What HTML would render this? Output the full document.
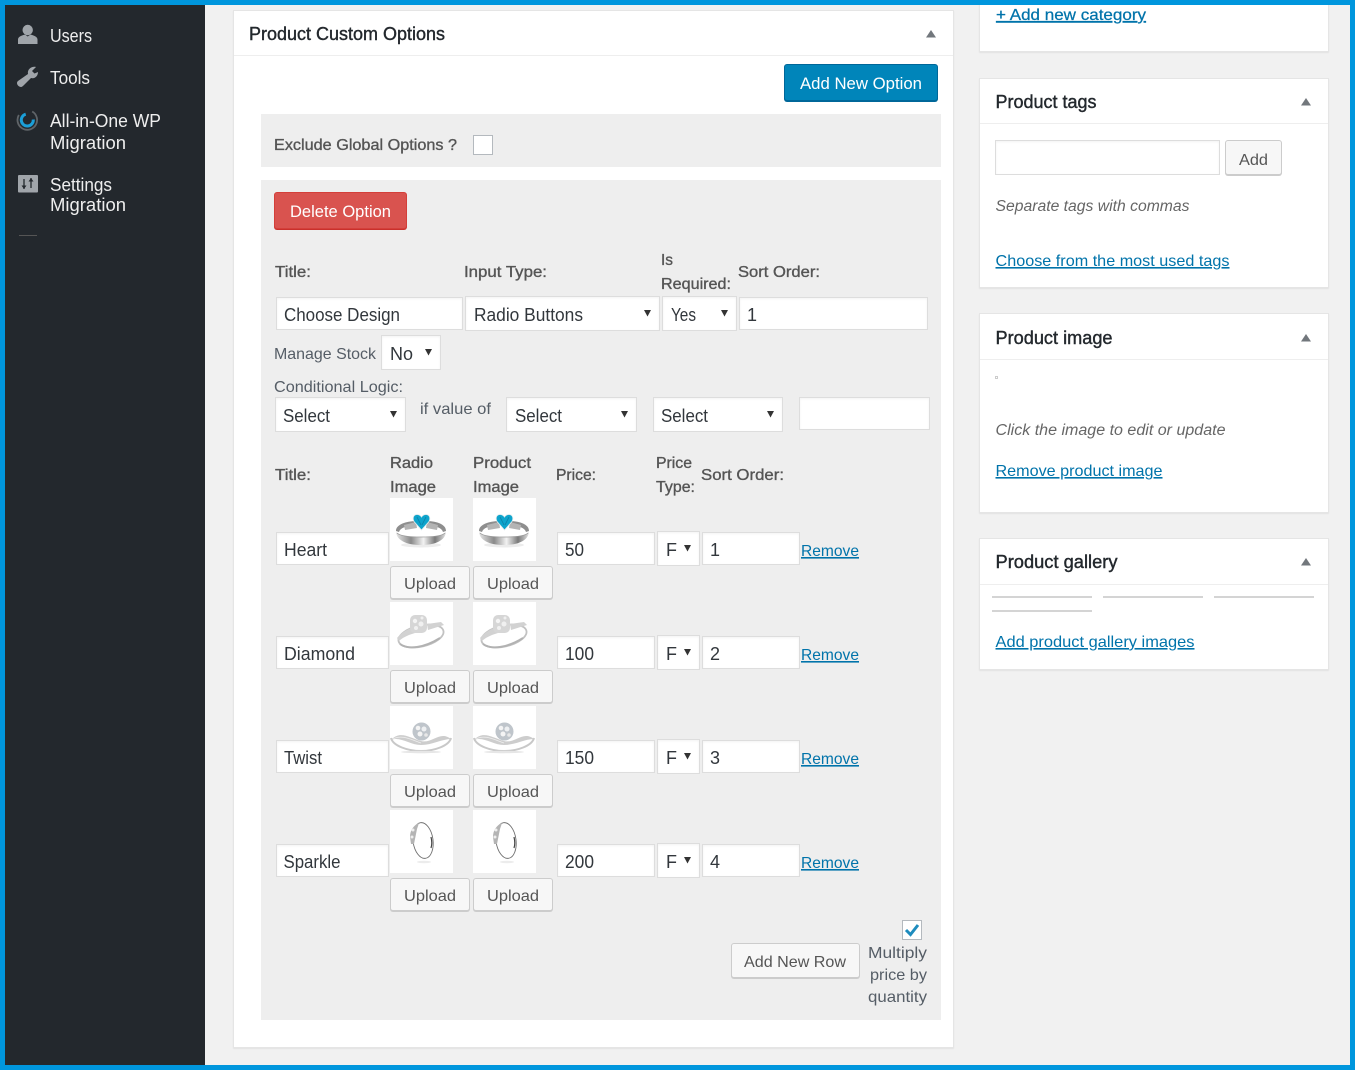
<!DOCTYPE html>
<html lang="en"><head><meta charset="utf-8"><title>Product Custom Options</title>
<style>
html,body{margin:0;padding:0;width:1355px;height:1070px;overflow:hidden;background:#f1f1f1}
div{position:absolute;box-sizing:border-box}
.mb{background:#fff;border:1px solid #e5e5e5;box-shadow:0 1px 1px rgba(0,0,0,.06)}
.ln{background:#eee;height:1px}
.pn{background:#eee}
.in{background:#fff;border:1px solid #ddd;box-shadow:inset 0 1px 2px rgba(0,0,0,.05)}
.bt{background:#f7f7f7;border:1px solid #ccc;border-radius:3px;box-shadow:0 1px 0 #ccc}
.im{background:#fff;width:63px;height:63px}
svg.o{position:absolute;left:0;top:0;width:1355px;height:1070px}
text{font-family:"Liberation Sans",sans-serif;font-size:16px;fill:#555d66;white-space:pre}
.s{font-size:18px;fill:#eee}
.h{font-size:18px;fill:#23282d;stroke:#23282d;stroke-width:.4px}
.l{font-size:15.5px;fill:#555;stroke:#555;stroke-width:.35px}
.v{font-size:18px;fill:#32373c}
.a{font-size:16px;fill:#0073aa;text-decoration:underline}
.i{font-size:15.5px;font-style:italic;fill:#666}
.b{font-size:16px;fill:#555}
.w{font-size:16.5px;fill:#fff}
</style></head><body>
<div style="left:0;top:0;width:1355px;height:1070px;background:#f1f1f1"></div>
<div style="left:5px;top:5px;width:200px;height:1060px;background:#23282d"></div>

<div class="mb" style="left:233px;top:10px;width:721px;height:1038px"></div>
<div class="ln" style="left:234px;top:55px;width:719px"></div>
<div style="left:784px;top:64px;width:154px;height:37px;background:#0085ba;border:1px solid #006799;border-radius:3px;box-shadow:0 1px 0 #006799"></div>
<div class="pn" style="left:261px;top:114px;width:680px;height:53px"></div>
<div style="left:473px;top:135px;width:20px;height:20px;background:#fff;border:1px solid #b4b9be"></div>
<div class="pn" style="left:261px;top:180px;width:680px;height:840px"></div>
<div style="left:274px;top:192px;width:133px;height:37px;background:#d9534f;border:1px solid #d43f3a;border-radius:3px;box-shadow:0 1px 0 #c9302c"></div>

<div class="in" style="left:276px;top:297px;width:187px;height:33px"></div>
<div class="in" style="left:465px;top:296px;width:195px;height:35px"></div>
<div class="in" style="left:662px;top:296px;width:75px;height:35px"></div>
<div class="in" style="left:739px;top:297px;width:189px;height:33px"></div>
<div class="in" style="left:381px;top:335px;width:60px;height:35px"></div>
<div class="in" style="left:275px;top:397px;width:131px;height:35px"></div>
<div class="in" style="left:506px;top:397px;width:131px;height:35px"></div>
<div class="in" style="left:653px;top:397px;width:130px;height:35px"></div>
<div class="in" style="left:799px;top:397px;width:131px;height:33px"></div>

<div class="in" style="left:276px;top:532px;width:113px;height:33px"></div><div class="im" style="left:390px;top:498px"></div><div class="im" style="left:473px;top:498px"></div><div class="bt" style="left:390px;top:566px;width:80px;height:33px"></div><div class="bt" style="left:473px;top:566px;width:80px;height:33px"></div><div class="in" style="left:557px;top:532px;width:98px;height:33px"></div><div class="in" style="left:657px;top:531px;width:43px;height:35px"></div><div class="in" style="left:702px;top:532px;width:98px;height:33px"></div>
<div class="in" style="left:276px;top:636px;width:113px;height:33px"></div><div class="im" style="left:390px;top:602px"></div><div class="im" style="left:473px;top:602px"></div><div class="bt" style="left:390px;top:670px;width:80px;height:33px"></div><div class="bt" style="left:473px;top:670px;width:80px;height:33px"></div><div class="in" style="left:557px;top:636px;width:98px;height:33px"></div><div class="in" style="left:657px;top:635px;width:43px;height:35px"></div><div class="in" style="left:702px;top:636px;width:98px;height:33px"></div>
<div class="in" style="left:276px;top:740px;width:113px;height:33px"></div><div class="im" style="left:390px;top:706px"></div><div class="im" style="left:473px;top:706px"></div><div class="bt" style="left:390px;top:774px;width:80px;height:33px"></div><div class="bt" style="left:473px;top:774px;width:80px;height:33px"></div><div class="in" style="left:557px;top:740px;width:98px;height:33px"></div><div class="in" style="left:657px;top:739px;width:43px;height:35px"></div><div class="in" style="left:702px;top:740px;width:98px;height:33px"></div>
<div class="in" style="left:276px;top:844px;width:113px;height:33px"></div><div class="im" style="left:390px;top:810px"></div><div class="im" style="left:473px;top:810px"></div><div class="bt" style="left:390px;top:878px;width:80px;height:33px"></div><div class="bt" style="left:473px;top:878px;width:80px;height:33px"></div><div class="in" style="left:557px;top:844px;width:98px;height:33px"></div><div class="in" style="left:657px;top:843px;width:43px;height:35px"></div><div class="in" style="left:702px;top:844px;width:98px;height:33px"></div>

<div class="bt" style="left:731px;top:943px;width:129px;height:35px"></div>
<div style="left:902px;top:920px;width:20px;height:20px;background:#fff;border:1px solid #b4b9be"></div>

<div class="mb" style="left:979px;top:-5px;width:350px;height:57px"></div>
<div class="mb" style="left:979px;top:78px;width:350px;height:210px"></div>
<div class="ln" style="left:980px;top:123px;width:348px"></div>
<div class="in" style="left:995px;top:140px;width:225px;height:35px"></div>
<div class="bt" style="left:1225px;top:140px;width:57px;height:35px"></div>
<div class="mb" style="left:979px;top:313px;width:350px;height:200px"></div>
<div class="ln" style="left:980px;top:359px;width:348px"></div>
<div style="left:995px;top:376px;width:3px;height:3px;background:#fff;border:1px solid #ccc"></div>
<div class="mb" style="left:979px;top:538px;width:350px;height:132px"></div>
<div class="ln" style="left:980px;top:584px;width:348px"></div>
<div style="left:992px;top:596px;width:100px;height:2px;background:#d4d4d4"></div>
<div style="left:1103px;top:596px;width:100px;height:2px;background:#d4d4d4"></div>
<div style="left:1214px;top:596px;width:100px;height:2px;background:#d4d4d4"></div>
<div style="left:992px;top:610px;width:100px;height:2px;background:#d4d4d4"></div>
<div style="left:19px;top:235px;width:18px;height:1px;background:#555"></div>

<svg class="o" viewBox="0 0 1355 1070" xmlns="http://www.w3.org/2000/svg">
<defs>
<linearGradient id="g" x1="0" x2="1" y1="0" y2="0"><stop offset="0" stop-color="#e6e6e6"/><stop offset=".3" stop-color="#8a8a8a"/><stop offset=".55" stop-color="#f2f2f2"/><stop offset=".78" stop-color="#7a7a7a"/><stop offset="1" stop-color="#e2e2e2"/></linearGradient>
<filter id="bl" x="-10%" y="-10%" width="120%" height="120%"><feGaussianBlur stdDeviation=".35"/></filter>
<g id="r1" filter="url(#bl)">
<ellipse cx="31" cy="47" rx="20" ry="2.500" fill="#ececec"/>
<path d="M6 33C6 27 14 24 24 23L25 27C16 28 10 30 9 34Z" fill="#8e8e8e"/>
<path d="M56 33C56 27 49 24 39 23L38 27C46 28 52 30 53 34Z" fill="#8e8e8e"/>
<path d="M6 33C6 42 16 47 31 47S56 42 56 33C56 37 46 39 31 39S6 37 6 33Z" fill="url(#g)"/>
<path d="M7 35C10 38 20 39 31 39S52 38 55 35" fill="none" stroke="#999" stroke-width=".8"/>
<path d="M14 27L26 24 27 30 15 32Z" fill="#b4b4b4"/><path d="M48 27L37 24 36 30 47 32Z" fill="#b4b4b4"/>
<path d="M31.500 32L24 23.500C22 19.500 24 16.500 27 16.500C29 16.500 30.500 17.500 31.500 19C32.500 17.500 34 16.500 36 16.500C39 16.500 41 19.500 39 23.500Z" fill="#0fa4cc" stroke="#e4ecee" stroke-width=".8"/>
<path d="M27 19L31 27M36 19L32 27" stroke="#0a7fa6" stroke-width=".8"/>
</g>
<g id="r2" filter="url(#bl)">
<ellipse cx="31" cy="34" rx="23" ry="10.500" transform="rotate(-13 31 34)" fill="none" stroke="#c2c2c2" stroke-width="1.800"/>
<path d="M7 36C12 30 18 27 24 25L25 31C18 33 12 36 9 39Z" fill="#d2d2d2"/>
<path d="M37 22L51 20 54 23 38 28Z" fill="#d2d2d2"/>
<path d="M10 42C18 48 34 46 50 36" fill="none" stroke="#b2b2b2" stroke-width="2"/>
<rect x="20" y="13" width="17" height="18" rx="5" fill="#d6d6d6"/>
<circle cx="25" cy="19" r="2.200" fill="#f4f4f4"/><circle cx="31" cy="22" r="2.500" fill="#f0f0f0"/><circle cx="26" cy="26" r="2" fill="#f0f0f0"/><circle cx="32" cy="16" r="1.500" fill="#f0f0f0"/>
</g>
<g id="r3" filter="url(#bl)">
<path d="M1 32C3 40 18 45 31 45S59 40 61 32" fill="none" stroke="#c8c8c8" stroke-width="2"/>
<path d="M1 34C10 24 20 32 31 35S50 24 61 33C52 33 42 39 31 39S10 30 1 34Z" fill="#cdcdcd"/>
<path d="M3 33C12 28 22 34 31 37" fill="none" stroke="#eee" stroke-width=".8"/>
<circle cx="31.500" cy="25.500" r="9" fill="#bfc5cb"/>
<circle cx="28" cy="22" r="2.300" fill="#f4f4f4"/><circle cx="34" cy="23" r="2.500" fill="#eef0f2"/><circle cx="30" cy="28" r="2.500" fill="#f4f4f4"/><circle cx="36" cy="29" r="1.800" fill="#e8e8e8"/>
<ellipse cx="31" cy="46" rx="20" ry="1.200" fill="#e6e6e6"/>
</g>
<g id="r4" filter="url(#bl)">
<ellipse cx="33" cy="30.500" rx="10" ry="18" transform="rotate(-8 33 30.500)" fill="none" stroke="#6f6f6f" stroke-width=".9"/>
<path d="M20 27C20 20 24 15 29 13L27 19 24 34 21 34Z" fill="#b4b4b4"/>
<circle cx="23" cy="20" r="1.500" fill="#eee"/><circle cx="22" cy="27" r="1.500" fill="#eee"/>
<path d="M41 27C42 31 42 35 41 38" stroke="#444" stroke-width="1.200" fill="none"/>
<ellipse cx="34" cy="52" rx="7" ry="1.200" fill="#ececec"/>
</g>
</defs>

<!-- sidebar icons -->
<g fill="#a0a5aa">
<circle cx="27.700" cy="30" r="5.200"/><path d="M18 44V39.500C18 36.500 22 35.500 25 34.500L27.700 36.500 30.500 34.500C33.500 35.500 37.500 36.500 37.500 39.500V44Z"/>
<path d="M17 83C17 85 19 87 21 87C22 87 23 86 24 85L31 78C35 79 38 76 38 72L34.500 73.500 32 71 36 67C32 66 27 69 28 74L18 81C17.500 81.500 17 82 17 83Z"/>
<rect x="18" y="175" width="20" height="17.500" rx="1"/>
</g>
<circle cx="27.300" cy="120" r="9.800" fill="none" stroke="#5f6468" stroke-width="1.800" stroke-dasharray="46 16" transform="rotate(-60 27.300 120)"/>
<circle cx="27.300" cy="120" r="6" fill="none" stroke="#1b9fd8" stroke-width="3" stroke-dasharray="27 11" transform="rotate(-5 27.300 120)"/>
<path d="M24 179V189M31 178V188" stroke="#23282d" stroke-width="1.300"/><path d="M21.500 185.500H26.500L24 189ZM28.500 181.500H33.500L31 178Z" fill="#23282d"/>

<text class="s" x="50" y="42" textLength="42" lengthAdjust="spacingAndGlyphs">Users</text>
<text class="s" x="50" y="84" textLength="40" lengthAdjust="spacingAndGlyphs">Tools</text>
<text class="s" x="50" y="127" textLength="111" lengthAdjust="spacingAndGlyphs">All-in-One WP</text>
<text class="s" x="50" y="149" textLength="76" lengthAdjust="spacingAndGlyphs">Migration</text>
<text class="s" x="50" y="191" textLength="62" lengthAdjust="spacingAndGlyphs">Settings</text>
<text class="s" x="50" y="211" textLength="76" lengthAdjust="spacingAndGlyphs">Migration</text>

<text class="h" x="249" y="40" textLength="196" lengthAdjust="spacingAndGlyphs">Product Custom Options</text>
<path d="M926 37.500L931 30 936 37.500Z" fill="#72777c"/>
<text class="w" x="800" y="89" textLength="122" lengthAdjust="spacingAndGlyphs">Add New Option</text>
<text class="l" x="274" y="150" textLength="183" lengthAdjust="spacingAndGlyphs">Exclude Global Options ?</text>
<text class="w" x="290" y="217" textLength="101" lengthAdjust="spacingAndGlyphs">Delete Option</text>

<text class="l" x="275" y="277" textLength="36" lengthAdjust="spacingAndGlyphs">Title:</text>
<text class="l" x="464" y="277" textLength="83" lengthAdjust="spacingAndGlyphs">Input Type:</text>
<text class="l" x="661" y="265" textLength="12" lengthAdjust="spacingAndGlyphs">Is</text>
<text class="l" x="661" y="289" textLength="70" lengthAdjust="spacingAndGlyphs">Required:</text>
<text class="l" x="738" y="277" textLength="82" lengthAdjust="spacingAndGlyphs">Sort Order:</text>

<text class="v" x="284" y="321" textLength="116" lengthAdjust="spacingAndGlyphs">Choose Design</text>
<text class="v" x="474" y="321" textLength="109" lengthAdjust="spacingAndGlyphs">Radio Buttons</text>
<text class="v" x="671" y="321" textLength="25" lengthAdjust="spacingAndGlyphs">Yes</text>
<text class="v" x="747" y="321">1</text>
<text x="274" y="359" textLength="102" lengthAdjust="spacingAndGlyphs">Manage Stock</text>
<text class="v" x="390" y="360" textLength="23" lengthAdjust="spacingAndGlyphs">No</text>
<text x="274" y="392" textLength="129" lengthAdjust="spacingAndGlyphs">Conditional Logic:</text>
<text class="v" x="283" y="422" textLength="47" lengthAdjust="spacingAndGlyphs">Select</text>
<text x="420" y="414" textLength="71" lengthAdjust="spacingAndGlyphs">if value of</text>
<text class="v" x="515" y="422" textLength="47" lengthAdjust="spacingAndGlyphs">Select</text>
<text class="v" x="661" y="422" textLength="47" lengthAdjust="spacingAndGlyphs">Select</text>
<g fill="#333">
<path d="M644 310H651L647.500 316.500Z"/><path d="M721 310H728L724.500 316.500Z"/><path d="M425 349H432L428.500 355.500Z"/>
<path d="M390 411H397L393.500 417.500Z"/><path d="M621 411H628L624.500 417.500Z"/><path d="M767 411H774L770.500 417.500Z"/>
<path d="M684 545H691L687.500 551.500Z"/><path d="M684 649H691L687.500 655.500Z"/><path d="M684 753H691L687.500 759.500Z"/><path d="M684 857H691L687.500 863.500Z"/>
</g>

<text class="l" x="275" y="480" textLength="36" lengthAdjust="spacingAndGlyphs">Title:</text>
<text class="l" x="390" y="468" textLength="43" lengthAdjust="spacingAndGlyphs">Radio</text>
<text class="l" x="390" y="492" textLength="46" lengthAdjust="spacingAndGlyphs">Image</text>
<text class="l" x="473" y="468" textLength="58" lengthAdjust="spacingAndGlyphs">Product</text>
<text class="l" x="473" y="492" textLength="46" lengthAdjust="spacingAndGlyphs">Image</text>
<text class="l" x="556" y="480" textLength="40" lengthAdjust="spacingAndGlyphs">Price:</text>
<text class="l" x="656" y="468" textLength="36" lengthAdjust="spacingAndGlyphs">Price</text>
<text class="l" x="656" y="492" textLength="39" lengthAdjust="spacingAndGlyphs">Type:</text>
<text class="l" x="701" y="480" textLength="83" lengthAdjust="spacingAndGlyphs">Sort Order:</text>

<use href="#r1" x="390" y="498"/><use href="#r1" x="473" y="498"/>
<use href="#r2" x="390" y="602"/><use href="#r2" x="473" y="602"/>
<use href="#r3" x="390" y="706"/><use href="#r3" x="473" y="706"/>
<use href="#r4" x="390" y="810"/><use href="#r4" x="473" y="810"/>

<text class="v" x="284" y="556" textLength="43" lengthAdjust="spacingAndGlyphs">Heart</text>
<text class="v" x="565" y="556" textLength="19" lengthAdjust="spacingAndGlyphs">50</text>
<text class="v" x="666" y="556">F</text><text class="v" x="710" y="556">1</text>
<text class="a" x="801" y="556" textLength="58" lengthAdjust="spacingAndGlyphs">Remove</text>
<text class="b" x="404" y="589" textLength="52" lengthAdjust="spacingAndGlyphs">Upload</text>
<text class="b" x="487" y="589" textLength="52" lengthAdjust="spacingAndGlyphs">Upload</text>

<text class="v" x="284" y="660" textLength="71" lengthAdjust="spacingAndGlyphs">Diamond</text>
<text class="v" x="565" y="660" textLength="29" lengthAdjust="spacingAndGlyphs">100</text>
<text class="v" x="666" y="660">F</text><text class="v" x="710" y="660">2</text>
<text class="a" x="801" y="660" textLength="58" lengthAdjust="spacingAndGlyphs">Remove</text>
<text class="b" x="404" y="693" textLength="52" lengthAdjust="spacingAndGlyphs">Upload</text>
<text class="b" x="487" y="693" textLength="52" lengthAdjust="spacingAndGlyphs">Upload</text>

<text class="v" x="284" y="764" textLength="38" lengthAdjust="spacingAndGlyphs">Twist</text>
<text class="v" x="565" y="764" textLength="29" lengthAdjust="spacingAndGlyphs">150</text>
<text class="v" x="666" y="764">F</text><text class="v" x="710" y="764">3</text>
<text class="a" x="801" y="764" textLength="58" lengthAdjust="spacingAndGlyphs">Remove</text>
<text class="b" x="404" y="797" textLength="52" lengthAdjust="spacingAndGlyphs">Upload</text>
<text class="b" x="487" y="797" textLength="52" lengthAdjust="spacingAndGlyphs">Upload</text>

<text class="v" x="283.500" y="868" textLength="57" lengthAdjust="spacingAndGlyphs">Sparkle</text>
<text class="v" x="565" y="868" textLength="29" lengthAdjust="spacingAndGlyphs">200</text>
<text class="v" x="666" y="868">F</text><text class="v" x="710" y="868">4</text>
<text class="a" x="801" y="868" textLength="58" lengthAdjust="spacingAndGlyphs">Remove</text>
<text class="b" x="404" y="901" textLength="52" lengthAdjust="spacingAndGlyphs">Upload</text>
<text class="b" x="487" y="901" textLength="52" lengthAdjust="spacingAndGlyphs">Upload</text>

<text class="b" x="744" y="967" textLength="102" lengthAdjust="spacingAndGlyphs">Add New Row</text>
<path d="M906 930L910.500 934.500 918 925" fill="none" stroke="#1e8cbe" stroke-width="3"/>
<text x="868" y="958" textLength="59" lengthAdjust="spacingAndGlyphs">Multiply</text>
<text x="870" y="980" textLength="57" lengthAdjust="spacingAndGlyphs">price by</text>
<text x="868" y="1002" textLength="59" lengthAdjust="spacingAndGlyphs">quantity</text>

<text class="a" x="996" y="20" textLength="150" lengthAdjust="spacingAndGlyphs" style="stroke:#0073aa;stroke-width:.25px">+ Add new category</text>
<text class="h" x="995.500" y="108" textLength="101" lengthAdjust="spacingAndGlyphs">Product tags</text>
<path d="M1301 105.500L1306 98 1311 105.500Z" fill="#72777c"/>
<text class="b" x="1239" y="165" textLength="29" lengthAdjust="spacingAndGlyphs">Add</text>
<text class="i" x="995.500" y="211" textLength="194" lengthAdjust="spacingAndGlyphs">Separate tags with commas</text>
<text class="a" x="995.500" y="266" textLength="234" lengthAdjust="spacingAndGlyphs">Choose from the most used tags</text>

<text class="h" x="995.500" y="344" textLength="117" lengthAdjust="spacingAndGlyphs">Product image</text>
<path d="M1301 341.500L1306 334 1311 341.500Z" fill="#72777c"/>
<text class="i" x="995.500" y="435" textLength="230" lengthAdjust="spacingAndGlyphs">Click the image to edit or update</text>
<text class="a" x="995.500" y="476" textLength="167" lengthAdjust="spacingAndGlyphs">Remove product image</text>

<text class="h" x="995.500" y="568" textLength="122" lengthAdjust="spacingAndGlyphs">Product gallery</text>
<path d="M1301 565.500L1306 558 1311 565.500Z" fill="#72777c"/>
<text class="a" x="995.500" y="647" textLength="199" lengthAdjust="spacingAndGlyphs">Add product gallery images</text>
</svg>

<div style="left:0;top:0;width:1355px;height:5px;background:#0096dd"></div>
<div style="left:0;top:1065px;width:1355px;height:5px;background:#0096dd"></div>
<div style="left:0;top:0;width:5px;height:1070px;background:#0096dd"></div>
<div style="left:1350px;top:0;width:5px;height:1070px;background:#0096dd"></div>
</body></html>
